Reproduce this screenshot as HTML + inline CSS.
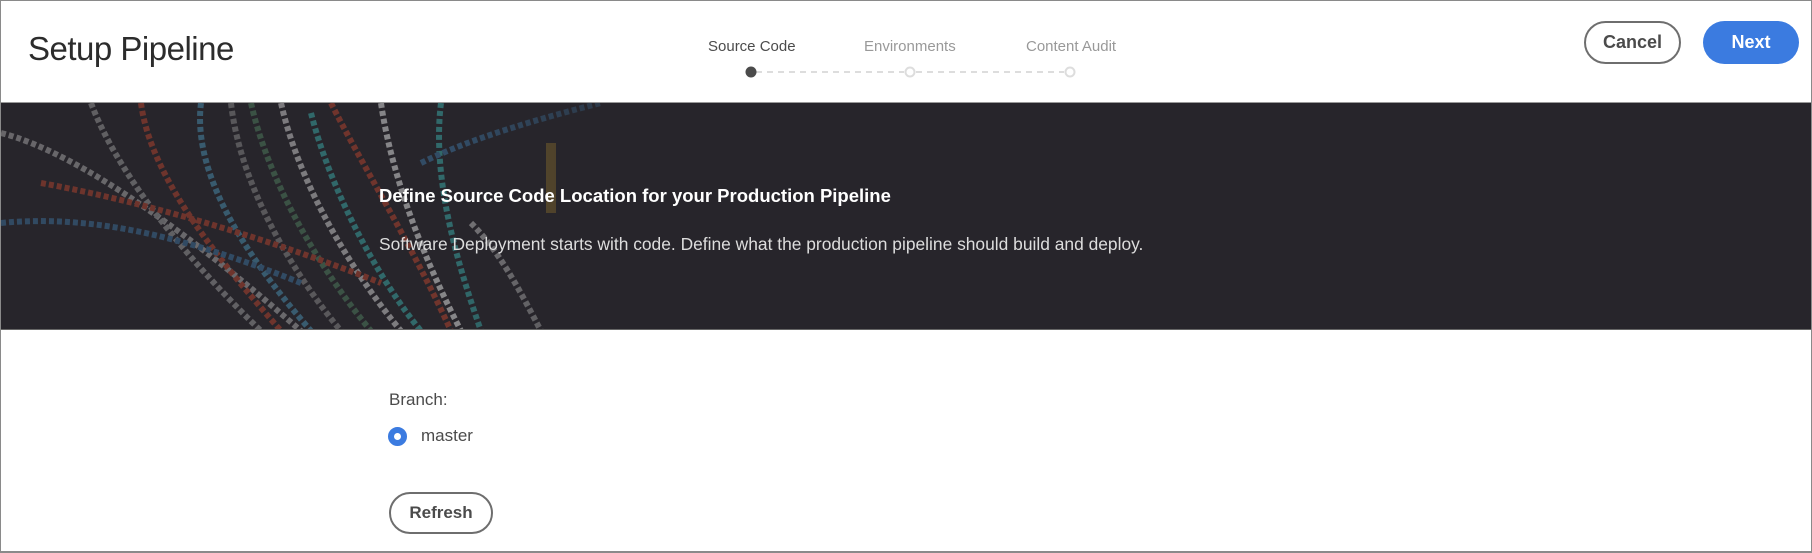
<!DOCTYPE html>
<html><head><meta charset="utf-8"><style>
*{margin:0;padding:0;box-sizing:border-box}
body{width:1812px;height:553px;overflow:hidden;background:#fff;font-family:"Liberation Sans",sans-serif;position:relative}
.frame{position:absolute;left:0;top:0;width:1812px;height:553px;border:1px solid #8a8a8a;border-bottom:2px solid #8a8a8a}
.abs{position:absolute;white-space:nowrap}
.title{left:28px;top:30px;font-size:33px;font-weight:300;color:#2c2c2c;letter-spacing:-0.5px}
.step{top:38px;font-size:15px;color:#999}
.btn{position:absolute;border-radius:22px;font-weight:bold;font-size:18px;display:flex;align-items:center;justify-content:center}
.banner{position:absolute;left:1px;top:102px;width:1810px;height:228px;background:#27252b;overflow:hidden;border-top:1px solid #999;border-bottom:1px solid #666}
</style></head><body>
<div class="abs title">Setup Pipeline</div>
<div class="abs step" style="left:708px;color:#4b4b4b">Source Code</div>
<div class="abs step" style="left:864px">Environments</div>
<div class="abs step" style="left:1026px">Content Audit</div>
<svg class="abs" style="left:740px;top:62px" width="340" height="20">
<line x1="16" y1="10" x2="164" y2="10" stroke="#ddd" stroke-width="2" stroke-dasharray="6 5"/>
<line x1="176" y1="10" x2="324" y2="10" stroke="#ddd" stroke-width="2" stroke-dasharray="6 5"/>
<circle cx="11" cy="10" r="5.5" fill="#4b4b4b"/>
<circle cx="170" cy="10" r="4.5" fill="#fff" stroke="#ddd" stroke-width="2"/>
<circle cx="330" cy="10" r="4.5" fill="#fff" stroke="#ddd" stroke-width="2"/>
</svg>
<div class="btn" style="left:1584px;top:21px;width:97px;height:43px;border:2.5px solid #6e6e6e;color:#4b4b4b">Cancel</div>
<div class="btn" style="left:1703px;top:21px;width:96px;height:43px;background:#3b7be0;color:#fff">Next</div>
<div class="banner">
<svg width="760" height="228" style="position:absolute;left:0;top:0">
<g fill="none" stroke-width="6" stroke-dasharray="5 3" opacity="0.7">
<path d="M0 30 C80 50 200 140 300 228" stroke="#aaa"/>
<path d="M90 0 C120 80 200 170 260 228" stroke="#9a9a9a"/>
<path d="M140 0 C150 80 230 170 280 228" stroke="#b5432e"/>
<path d="M200 0 C190 80 260 170 310 228" stroke="#4a8fb0"/>
<path d="M230 0 C240 90 300 180 340 228" stroke="#888"/>
<path d="M250 0 C270 90 330 180 370 228" stroke="#8fa"  opacity=".4"/>
<path d="M280 0 C300 90 360 180 400 228" stroke="#ccc"/>
<path d="M310 10 C330 90 380 180 420 228" stroke="#3aa7a5"/>
<path d="M330 0 C360 60 410 140 450 228" stroke="#b5432e"/>
<path d="M380 0 C390 70 420 150 460 228" stroke="#ddd"/>
<path d="M440 0 C430 80 460 170 480 228" stroke="#3aa7a5"/>
<path d="M0 120 C100 110 200 140 300 180" stroke="#3c6f9a"/>
<path d="M40 80 C150 100 280 140 380 180" stroke="#b5432e"/>
<path d="M420 60 C460 40 520 20 600 0" stroke="#3c6f9a"/>
<path d="M470 120 C500 150 520 190 540 228" stroke="#bbb"/>
</g>
<rect x="545" y="40" width="10" height="70" fill="#c59a2c" opacity=".5"/>
<rect x="0" y="0" width="760" height="228" fill="url(#f)"/>
<defs><linearGradient id="f" x1="0" x2="1"><stop offset="0" stop-color="#27252b" stop-opacity=".3"/><stop offset=".6" stop-color="#27252b" stop-opacity=".25"/><stop offset="1" stop-color="#27252b" stop-opacity="1"/></linearGradient></defs>
</svg>
</div>
<div class="abs" style="left:379px;top:185px;font-size:18.5px;font-weight:bold;color:#fff">Define Source Code Location for your Production Pipeline</div>
<div class="abs" style="left:379px;top:234px;font-size:17.4px;color:#ddd">Software Deployment starts with code. Define what the production pipeline should build and deploy.</div>
<div class="abs" style="left:389px;top:390px;font-size:17px;color:#4b4b4b">Branch:</div>
<div class="abs" style="left:388px;top:427px;width:19px;height:19px;border-radius:50%;border:6px solid #3b7be0;background:#fff"></div>
<div class="abs" style="left:421px;top:426px;font-size:17px;color:#4b4b4b">master</div>
<div class="btn" style="left:389px;top:492px;width:104px;height:42px;border:2.5px solid #6e6e6e;color:#4b4b4b;font-size:17px">Refresh</div>
<div class="frame"></div>
</body></html>
